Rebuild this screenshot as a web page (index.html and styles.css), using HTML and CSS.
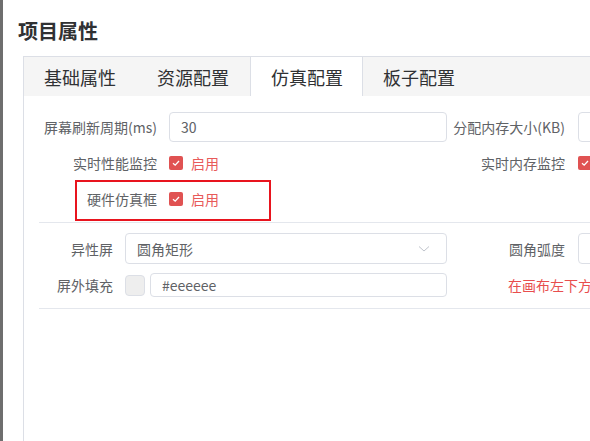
FILE: index.html
```html
<!DOCTYPE html>
<html lang="zh-CN">
<head>
<meta charset="utf-8">
<title>项目属性</title>
<link rel="stylesheet" href="styles.css">
</head>
<body>
<div class="edge"></div>
<div class="dialog">
    <h1 class="title">项目属性</h1>

    <div class="tabs">
        <div class="tab-head">
            <div class="tab">基础属性</div>
            <div class="tab">资源配置</div>
            <div class="tab active">仿真配置</div>
            <div class="tab">板子配置</div>
        </div>

        <div class="tab-body">
            <!-- 运行参数 -->
            <div class="section first">
                <div class="row">
                    <div class="item">
                        <label class="label">屏幕刷新周期(ms)</label>
                        <div class="input">30</div>
                    </div>
                    <div class="item right">
                        <label class="label">分配内存大小(KB)</label>
                        <div class="input"></div>
                    </div>
                </div>
                <div class="row">
                    <div class="item">
                        <label class="label">实时性能监控</label>
                        <div class="check"><span class="box"><svg width="14" height="14" viewBox="0 0 14 14"><path d="M4 7.2 L6.2 9.2 L10 5" fill="none" stroke="#fff" stroke-width="1.3"/></svg></span>启用</div>
                    </div>
                    <div class="item right">
                        <label class="label">实时内存监控</label>
                        <div class="check"><span class="box"><svg width="14" height="14" viewBox="0 0 14 14"><path d="M4 7.2 L6.2 9.2 L10 5" fill="none" stroke="#fff" stroke-width="1.3"/></svg></span>启用</div>
                    </div>
                </div>
                <div class="row marked">
                    <div class="item">
                        <label class="label">硬件仿真框</label>
                        <div class="check"><span class="box"><svg width="14" height="14" viewBox="0 0 14 14"><path d="M4 7.2 L6.2 9.2 L10 5" fill="none" stroke="#fff" stroke-width="1.3"/></svg></span>启用</div>
                    </div>
                    <div class="mark"></div>
                </div>
            </div>

            <!-- 异性屏 -->
            <div class="section second">
                <div class="row tall">
                    <div class="item">
                        <label class="label">异性屏</label>
                        <div class="input select">圆角矩形
                            <svg class="arrow" width="12" height="8" viewBox="0 0 12 8"><path d="M1 1.5 L6 6 L11 1.5" fill="none" stroke="#c0c4cc" stroke-width="1"/></svg>
                        </div>
                    </div>
                    <div class="item right">
                        <label class="label">圆角弧度</label>
                        <div class="input"></div>
                    </div>
                </div>
                <div class="row short">
                    <div class="item">
                        <label class="label">屏外填充</label>
                        <span class="swatch"></span>
                        <div class="input small">#eeeeee</div>
                    </div>
                    <div class="item right">
                        <span class="hint">在画布左下方显示</span>
                    </div>
                </div>
            </div>

            <div class="section last"></div>
        </div>
    </div>
</div>
</body>
</html>
```

FILE: styles.css
```css
html, body {
    margin: 0;
    height: 441px;
    overflow: hidden;
    background: #fff;
    font-family: "Noto Sans CJK SC", "Noto Sans", sans-serif;
    font-size: 14px;
    color: #606266;
}

body {
    display: flex;
}

.edge {
    width: 3px;
    flex: none;
    background: #6e6e6e;
}

.dialog {
    flex: none;
    width: 760px;
    padding-left: 20px;
}

.title {
    margin: 0 0 0 -5px;
    padding-top: 17px;
    height: 56px;
    box-sizing: border-box;
    font-size: 20px;
    line-height: 28px;
    font-weight: 600;
    color: #303133;
}

.tabs {
    border-top: 1px solid #dcdfe6;
    border-left: 1px solid #dcdfe6;
    height: 400px;
}

.tab-head {
    display: flex;
    height: 39px;
    background: #f5f5f5;
}

.tab {
    width: 113px;
    padding-left: 20px;
    box-sizing: border-box;
    font-size: 18px;
    line-height: 40px;
    color: #303133;
}

.tab.active {
    background: #fff;
    border-left: 1px solid #dcdfe6;
    border-right: 1px solid #dcdfe6;
}

.tab-body {
    padding-left: 15px;
}

.section {
    border-bottom: 1px solid #e4e7ed;
}

.section.first {
    padding: 16px 0 8px;
}

.section.second {
    padding: 10px 0 11px;
}

.section.last {
    border-bottom: none;
}

.row {
    display: flex;
    align-items: center;
    height: 30px;
    margin-bottom: 6px;
}

.row:last-child {
    margin-bottom: 0;
}

.row.tall {
    height: 31px;
    margin-bottom: 9px;
}

.row.short {
    height: 24px;
}

.item {
    display: flex;
    align-items: center;
    width: 408px;
    height: 100%;
}

.item.right {
    width: 300px;
}

.label {
    flex: none;
    width: 130px;
    padding-right: 12px;
    box-sizing: border-box;
    text-align: right;
    white-space: nowrap;
}

.item.right .label {
    width: 131px;
    padding-right: 13px;
}

.second .item .label {
    width: 86px;
}

.second .item.right .label {
    width: 131px;
}

.input {
    flex: 1;
    height: 100%;
    box-sizing: border-box;
    border: 1px solid #dcdfe6;
    border-radius: 4px;
    padding: 0 11px;
    display: flex;
    align-items: center;
    color: #606266;
}

.select {
    justify-content: space-between;
}

.arrow {
    margin-right: 5px;
}

.input.small {
    height: 24px;
}

.swatch {
    flex: none;
    width: 20px;
    height: 21px;
    box-sizing: border-box;
    border: 1px solid #dcdfe6;
    border-radius: 4px;
    background: #eeeeee;
    margin-right: 5px;
}

.check {
    display: flex;
    align-items: center;
    color: #e85a5a;
}

.box {
    width: 14px;
    height: 14px;
    border-radius: 2px;
    background: #e05252;
    margin-right: 8px;
    display: flex;
}

.hint {
    margin-left: 61px;
    color: #e84e4e;
    white-space: nowrap;
}

.row.marked {
    position: relative;
}

/* 标注框 */
.mark {
    position: absolute;
    left: 36px;
    top: -4px;
    width: 196px;
    height: 41px;
    box-sizing: border-box;
    border: 2px solid #e8141e;
}
```
